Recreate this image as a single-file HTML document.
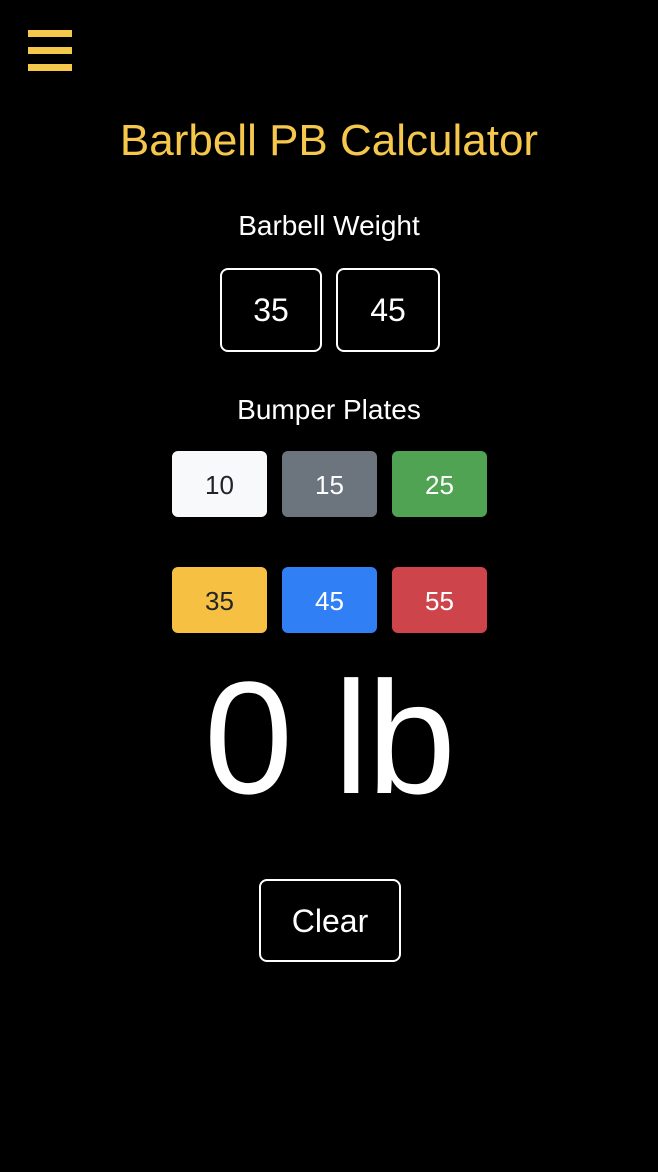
<!DOCTYPE html>
<html><head><style>
body{margin:0;background:#000;width:658px;height:1172px;position:relative;overflow:hidden;font-family:"Liberation Sans",sans-serif;}
.a{position:absolute;left:0;width:658px;text-align:center;}
.bar{position:absolute;left:28px;width:44px;height:7px;background:#f5c84c;}
.b{position:absolute;box-sizing:border-box;border:2px solid #fff;border-radius:8px;color:#fff;text-align:center;}
.p{position:absolute;width:95px;height:66px;border-radius:6px;text-align:center;line-height:68px;font-size:26px;color:#fff;}
</style></head><body>
<div class="bar" style="top:30px"></div>
<div class="bar" style="top:47px"></div>
<div class="bar" style="top:64px"></div>
<div class="a" style="top:119px;font-size:44px;line-height:44px;color:#f5c84c;">Barbell PB Calculator</div>
<div class="a" style="top:212px;font-size:28px;line-height:28px;color:#fff;">Barbell Weight</div>
<div class="b" style="left:220px;top:268px;width:102px;height:84px;font-size:32px;line-height:80px;">35</div>
<div class="b" style="left:336px;top:268px;width:104px;height:84px;font-size:32px;line-height:80px;">45</div>
<div class="a" style="top:396px;font-size:28px;line-height:28px;color:#fff;">Bumper Plates</div>
<div class="p" style="left:172px;top:451px;background:#f8f9fa;color:#212529">10</div>
<div class="p" style="left:282px;top:451px;background:#6c757d">15</div>
<div class="p" style="left:392px;top:451px;background:#4fa353">25</div>
<div class="p" style="left:172px;top:567px;background:#f6c142;color:#212529">35</div>
<div class="p" style="left:282px;top:567px;background:#307ff5">45</div>
<div class="p" style="left:392px;top:567px;background:#cd444a">55</div>
<div class="a" style="top:658px;font-size:160px;line-height:160px;color:#fff;letter-spacing:-2px;">0 lb</div>
<div class="b" style="left:259px;top:879px;width:142px;height:83px;font-size:32px;line-height:80px;">Clear</div>
</body></html>
